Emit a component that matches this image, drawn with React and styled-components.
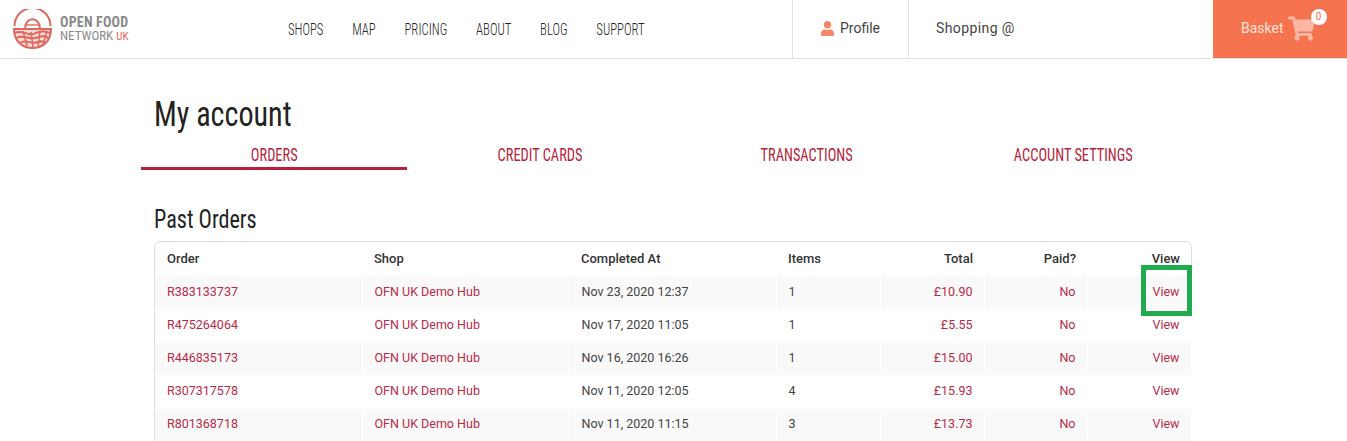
import React from "react";
import styled, { createGlobalStyle } from "styled-components";
import { FaUser, FaShoppingCart } from "react-icons/fa";

const GlobalStyle = createGlobalStyle`
  html, body {
    margin: 0;
    height: 441px;
    overflow: hidden;
    background: #fff;
    font-family: Roboto, "Liberation Sans", sans-serif;
    font-size: 13px;
    color: #333;
  }
`;

const narrow = `"Roboto Condensed", "Liberation Sans Narrow", "Liberation Sans", sans-serif`;

const Header = styled.header`
  display: flex;
  height: 58px;
  border-bottom: 1px solid #e2e2e2;
`;

const Brand = styled.div`
  display: flex;
  align-items: center;
  gap: 8px;
  width: 288px;
  padding-left: 13px;
  box-sizing: border-box;
`;

const BrandText = styled.div`
  font-family: ${narrow};
  color: #8a8a8a;
  font-size: 13px;
  line-height: 14px;
  padding-top: 1px;
`;

const BrandTop = styled.div`
  font-weight: bold;
  font-size: 14px;
  letter-spacing: 0.2px;
`;

const BrandUk = styled.span`
  color: #e0675c;
  font-size: 11px;
`;

const NavSlot = styled.div`
  display: flex;
  align-items: center;
  width: 504px;
  overflow: hidden;
`;

/* the reference face is narrower than anything installed, so squeeze it */
const Nav = styled.nav`
  display: flex;
  gap: 36px;
  font-family: ${narrow};
  font-size: 16px;
  font-weight: 300;
  color: #222;
  transform: scaleX(0.798);
  transform-origin: left center;
  white-space: nowrap;
`;

const HeaderCell = styled.div`
  display: flex;
  align-items: center;
  gap: 5px;
  box-sizing: border-box;
  border-left: 1px solid #e2e2e2;
  font-size: 14px;
  color: #444;
  padding-bottom: 2px;
  width: ${(p) => p.$width}px;
  padding-left: ${(p) => p.$pad}px;
`;

const ShoppingLabel = styled.span`
  letter-spacing: 0.4px;
`;

const ProfileIcon = styled(FaUser)`
  color: #f4876a;
  font-size: 15px;
`;

const Basket = styled.div`
  display: flex;
  align-items: center;
  gap: 4px;
  margin-left: auto;
  width: 134px;
  box-sizing: border-box;
  padding-left: 28px;
  padding-bottom: 2px;
  background: #f6734f;
  color: #fde3da;
  font-size: 14px;
`;

const CartWrap = styled.div`
  position: relative;
  display: flex;
`;

const CartIcon = styled(FaShoppingCart)`
  color: #fbb7a3;
  font-size: 27px;
`;

const CartBadge = styled.span`
  position: absolute;
  top: -6px;
  right: -12px;
  width: 16px;
  height: 16px;
  border-radius: 50%;
  background: #fff;
  color: #f6734f;
  font-size: 10px;
  line-height: 16px;
  text-align: center;
`;

const Main = styled.main`
  width: 1065px;
  margin-left: 141px;
`;

const Title = styled.h1`
  margin: 0;
  padding: 36px 0 0 13px;
  font-family: ${narrow};
  font-weight: normal;
  font-size: 35px;
  line-height: 40px;
  color: #222;
  transform: scaleX(0.86);
  transform-origin: 13px center;
`;

const Tabs = styled.div`
  display: grid;
  grid-template-columns: repeat(4, 1fr);
  margin-top: 3px;
`;

const Tab = styled.div`
  height: 32px;
  line-height: 33px;
  box-sizing: border-box;
  text-align: center;
  border-bottom: 3px solid ${(p) => (p.$active ? "#b81f3d" : "transparent")};
`;

const TabLabel = styled.span`
  display: inline-block;
  font-family: ${narrow};
  font-size: 18px;
  color: #b81f3d;
  transform: scaleX(0.8);
`;

const Subtitle = styled.h2`
  margin: 35px 0 0 13px;
  font-family: ${narrow};
  font-weight: normal;
  font-size: 25px;
  line-height: 30px;
  color: #222;
  transform: scaleX(0.887);
  transform-origin: left center;
`;

const Panel = styled.div`
  position: relative;
  margin: 6px 14px 0 13px;
  padding-bottom: 40px;
  border: 1px solid #ddd;
  border-radius: 6px;
`;

const Table = styled.table`
  width: 100%;
  table-layout: fixed;
  border-collapse: collapse;
`;

const Th = styled.th`
  height: 34px;
  padding: 0 11px 2px 12px;
  box-sizing: border-box;
  font-size: 13px;
  font-weight: 500;
  color: #333;
  text-align: ${(p) => (p.$right ? "right" : "left")};
  width: ${(p) => p.$width}px;
`;

const Row = styled.tr`
  height: 33px;
  background: ${(p) => (p.$odd ? "#f9f9f9" : "#fff")};
`;

const Td = styled.td`
  padding: 0 11px 2px 12px;
  font-size: 12.5px;
  color: ${(p) => (p.$plain ? "#444" : "#b92a48")};
  text-align: ${(p) => (p.$right ? "right" : "left")};
  border-right: 1px solid #fff;
  border-bottom: 1px solid #fff;
`;

const Highlight = styled.div`
  position: absolute;
  top: 23px;
  right: -1px;
  width: 51px;
  height: 51px;
  box-sizing: border-box;
  border: 5px solid #22aa4f;
`;

const Logo = () => (
  <svg width="39" height="40" viewBox="0 0 39 40" fill="none" stroke="#e0675c">
    <path d="M1.5 17 A18 18 0 0 1 37.5 17" strokeWidth="2" />
    <path d="M12 20 C12 7 27 7 27 20" strokeWidth="2" />
    <path d="M11.5 16 L27.5 16" strokeWidth="1.4" />
    <path d="M1 20 L38 20 C38 32 30 39 19.5 39 C9 39 1 32 1 20 Z" fill="#e0675c" fillOpacity="0.25" strokeWidth="2" />
    <path d="M1.5 24 C10 20 14 27 20 25 C26 23 30 21 37.5 24" strokeWidth="2" />
    <path d="M3.5 29 C10 25 16 31 22 29 C27 27.5 31 26 35.5 29" strokeWidth="2" />
    <path d="M7 34 C12 30 18 35 23 33.5 C27 32.5 29 31 32 34" strokeWidth="2" />
    <path d="M10 22 L14 37 M18 23 L20 38 M27 22 L25 38 M34 22 L30 36" strokeWidth="1.5" />
  </svg>
);

const columns = [
  { label: "Order", width: 207 },
  { label: "Shop", width: 207 },
  { label: "Completed At", width: 207 },
  { label: "Items", width: 104 },
  { label: "Total", width: 104, right: true },
  { label: "Paid?", width: 103, right: true },
  { label: "View", width: 104, right: true },
];

const orders = [
  ["R383133737", "Nov 23, 2020 12:37", "1", "£10.90"],
  ["R475264064", "Nov 17, 2020 11:05", "1", "£5.55"],
  ["R446835173", "Nov 16, 2020 16:26", "1", "£15.00"],
  ["R307317578", "Nov 11, 2020 12:05", "4", "£15.93"],
  ["R801368718", "Nov 11, 2020 11:15", "3", "£13.73"],
];

const navItems = ["SHOPS", "MAP", "PRICING", "ABOUT", "BLOG", "SUPPORT"];
const tabs = ["ORDERS", "CREDIT CARDS", "TRANSACTIONS", "ACCOUNT SETTINGS"];

export default function App() {
  return (
    <>
      <GlobalStyle />
      <Header>
        <Brand>
          <Logo />
          <BrandText>
            <BrandTop>OPEN FOOD</BrandTop>
            <div>
              NETWORK <BrandUk>UK</BrandUk>
            </div>
          </BrandText>
        </Brand>
        <NavSlot>
          <Nav>
            {navItems.map((item) => (
              <span key={item}>{item}</span>
            ))}
          </Nav>
        </NavSlot>
        <HeaderCell $width={116} $pad={27}>
          <ProfileIcon />
          Profile
        </HeaderCell>
        <HeaderCell $width={305} $pad={27}>
          <ShoppingLabel>Shopping @</ShoppingLabel>
        </HeaderCell>
        <Basket>
          Basket
          <CartWrap>
            <CartIcon />
            <CartBadge>0</CartBadge>
          </CartWrap>
        </Basket>
      </Header>
      <Main>
        <Title>My account</Title>
        <Tabs>
          {tabs.map((tab, i) => (
            <Tab key={tab} $active={i === 0}>
              <TabLabel>{tab}</TabLabel>
            </Tab>
          ))}
        </Tabs>
        <Subtitle>Past Orders</Subtitle>
        <Panel>
          <Table>
            <thead>
              <tr>
                {columns.map((c) => (
                  <Th key={c.label} $width={c.width} $right={c.right}>
                    {c.label}
                  </Th>
                ))}
              </tr>
            </thead>
            <tbody>
              {orders.map(([id, date, items, total], i) => (
                <Row key={id} $odd={i % 2 === 0}>
                  <Td>{id}</Td>
                  <Td>OFN UK Demo Hub</Td>
                  <Td $plain>{date}</Td>
                  <Td $plain>{items}</Td>
                  <Td $right>{total}</Td>
                  <Td $right>No</Td>
                  <Td $right>View</Td>
                </Row>
              ))}
            </tbody>
          </Table>
          <Highlight />
        </Panel>
      </Main>
    </>
  );
}
